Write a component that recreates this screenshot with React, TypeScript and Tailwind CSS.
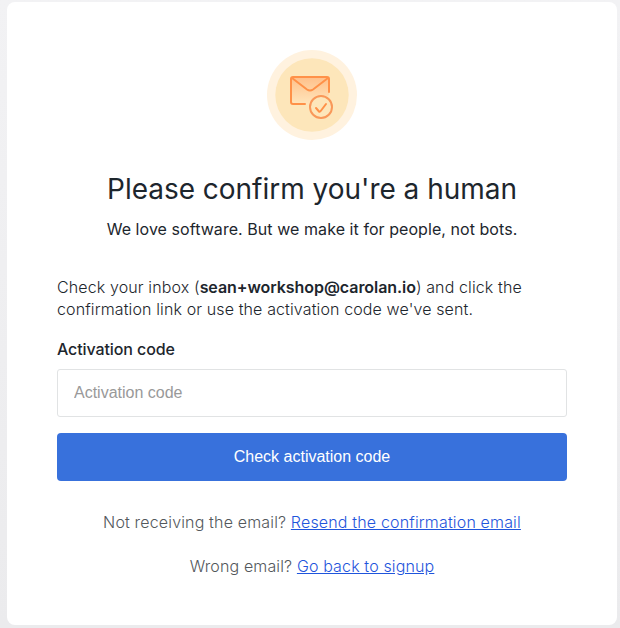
export default function App() {
  return (
    <div className="h-[628px] w-[620px] overflow-hidden bg-gradient-to-b from-[#f2f2f4] to-[#ebebed] pl-[7px] pt-[2px] font-[Inter,sans-serif] text-[#1d262d]">
      <main className="flex h-[623px] w-[610px] flex-col items-center rounded-lg bg-white px-[50px] pt-12">
        <svg width="90" height="90" viewBox="0 0 90 90" fill="none">
          <defs>
            <linearGradient id="envelope" x1="43" y1="27" x2="43" y2="54" gradientUnits="userSpaceOnUse">
              <stop stopColor="#ffc08a" />
              <stop offset="1" stopColor="#ffe5bb" />
            </linearGradient>
          </defs>
          <circle cx="45" cy="45" r="45" fill="#fff2df" />
          <circle cx="45" cy="45" r="36.700" fill="#fde6ba" />
          <path d="M24 28H62V45L52 54H24Z" fill="url(#envelope)" />
          <path d="M38 54H26Q24 54 24 52V29Q24 27 26 27H60Q62 27 62 29V42M25 28L40 39.500Q43 41.500 46 39.500L61 28" stroke="#ff9148" strokeWidth="2" strokeLinecap="round" strokeLinejoin="round" />
          <circle cx="54" cy="57" r="11" fill="#fde6ba" stroke="#f99859" strokeWidth="2" />
          <path d="M49 58L52 61.500Q53 62 53.700 61L59 54" stroke="#ff9148" strokeWidth="2" strokeLinecap="round" strokeLinejoin="round" />
        </svg>
        <h1 className="mt-[31px] whitespace-nowrap text-[28px] leading-9 tracking-[-0.02px]">Please confirm you're a human</h1>
        <p className="mt-[10px] whitespace-nowrap text-base leading-6 tracking-[0.06px]">We love software. But we make it for people, not bots.</p>
        <div className="mt-[35px] w-full">
          <p className="whitespace-nowrap text-base font-light leading-[22px] tracking-[0.12px]">Check your inbox (<b className="font-semibold tracking-[-0.06px]">sean+workshop@carolan.io</b>) and click the<br />confirmation link or use the activation code we've sent.</p>
          <label className="mt-[18px] block text-base font-medium leading-[22px] tracking-[-0.1px]" htmlFor="code">Activation code</label>
          <input id="code" placeholder="Activation code" className="mt-[9px] block h-12 w-full rounded-[3px] border border-[#e1e3e4] px-4 font-['Liberation_Sans',sans-serif] text-base placeholder:text-[#999]" />
          <button className="mt-4 block h-12 w-full rounded bg-[#3871dc] font-['Liberation_Sans',sans-serif] text-base text-white">Check activation code</button>
        </div>
        <p className="mt-[30px] whitespace-nowrap text-base font-light leading-[22px] tracking-[0.16px] text-[#53585c]">Not receiving the email? <a href="#" className="text-[#1f55dc] underline">Resend the confirmation email</a></p>
        <p className="mt-[22px] whitespace-nowrap text-base font-light leading-[22px] tracking-[0.14px] text-[#53585c]">Wrong email? <a href="#" className="text-[#1f55dc] underline">Go back to signup</a></p>
      </main>
    </div>
  );
}
